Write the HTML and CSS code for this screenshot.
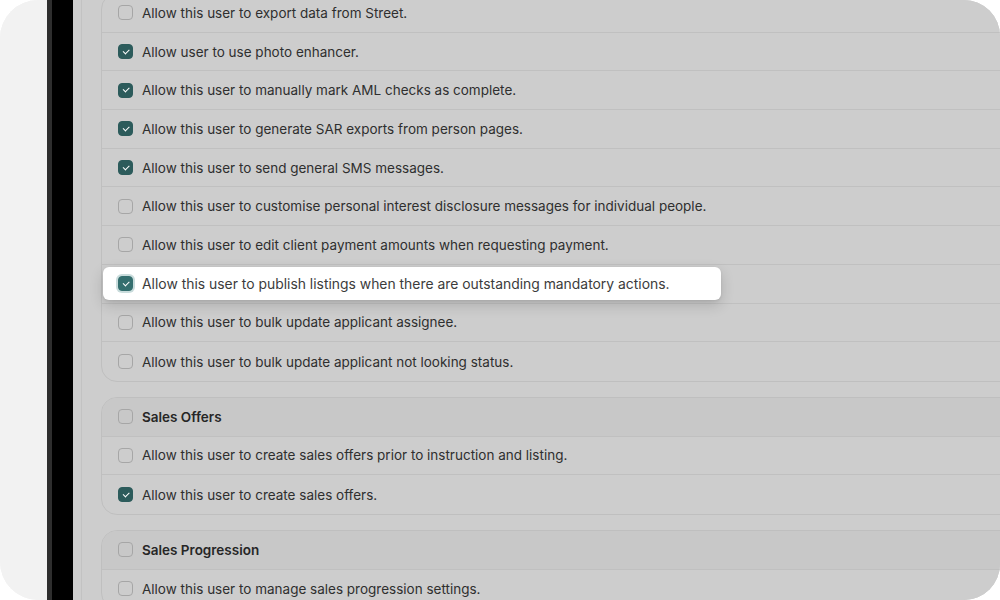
FILE: index.html
```html
<!DOCTYPE html>
<html lang="en">
<head>
<meta charset="utf-8">
<title>Permissions</title>
<link rel="stylesheet" href="styles.css">
</head>
<body>
<div class="frame">
  <div class="side"></div>
  <div class="bezel"></div>
  <div class="screen">
    <div class="rail"></div>
    <div class="content">
      <section class="card first">
        <div class="row"><span class="cb"></span><span class="label">Allow this user to export data from Street.</span></div>
        <div class="row"><span class="cb on"></span><span class="label">Allow user to use photo enhancer.</span></div>
        <div class="row"><span class="cb on"></span><span class="label">Allow this user to manually mark AML checks as complete.</span></div>
        <div class="row"><span class="cb on"></span><span class="label">Allow this user to generate SAR exports from person pages.</span></div>
        <div class="row"><span class="cb on"></span><span class="label">Allow this user to send general SMS messages.</span></div>
        <div class="row"><span class="cb"></span><span class="label">Allow this user to customise personal interest disclosure messages for individual people.</span></div>
        <div class="row"><span class="cb"></span><span class="label">Allow this user to edit client payment amounts when requesting payment.</span></div>
        <div class="row focus-row">
          <div class="lifted"><span class="cb on ring"></span><span class="label">Allow this user to publish listings when there are outstanding mandatory actions.</span></div>
        </div>
        <div class="row"><span class="cb"></span><span class="label">Allow this user to bulk update applicant assignee.</span></div>
        <div class="row"><span class="cb"></span><span class="label">Allow this user to bulk update applicant not looking status.</span></div>
      </section>
      <section class="card">
        <div class="row head"><span class="cb"></span><span class="label">Sales Offers</span></div>
        <div class="row"><span class="cb"></span><span class="label">Allow this user to create sales offers prior to instruction and listing.</span></div>
        <div class="row"><span class="cb on"></span><span class="label">Allow this user to create sales offers.</span></div>
      </section>
      <section class="card">
        <div class="row head"><span class="cb"></span><span class="label">Sales Progression</span></div>
        <div class="row"><span class="cb"></span><span class="label">Allow this user to manage sales progression settings.</span></div>
      </section>
    </div>
  </div>
</div>
</body>
</html>
```

FILE: styles.css
```css
* { box-sizing: border-box; }
html, body { margin: 0; padding: 0; }
body {
  background: #ffffff;
  width: 1000px;
  height: 600px;
  overflow: hidden;
  font-family: Inter, "Noto Sans", "Liberation Sans", sans-serif;
}
.frame {
  width: 1000px;
  height: 600px;
  border-radius: 38px 36px 36px 38px;
  overflow: hidden;
  display: flex;
  background: #f2f2f2;
}
.side { width: 47px; flex: none; background: #f2f2f2; }
.bezel {
  width: 26px;
  flex: none;
  background: #000;
  border-left: 5px solid #2e2e2e;
}
.screen {
  flex: 1;
  display: flex;
  background: #cdcdcd;
  min-width: 0;
  min-height: 0;
}
.rail {
  width: 9px;
  flex: none;
  border-right: 1px solid #c2c2c2;
}
.content {
  flex: none;
  width: 1000px;
  padding-left: 19px;
  margin-top: -7px;
  display: flex;
  flex-direction: column;
  gap: 15px;
}
.card {
  flex: none;
  border: 1px solid #bfbfbf;
  border-radius: 16px;
  overflow: hidden;
  background: #cdcdcd;
}
.row {
  flex: none;
  height: 38.7px;
  display: flex;
  align-items: center;
  padding-left: 16px;
  border-bottom: 1px solid #c0c0c0;
  font-size: 13.5px;
  color: #2f2f2f;
}
.row:last-child { border-bottom: none; }
.row.head {
  background: #c8c8c8;
  font-weight: 600;
  color: #262626;
}
.cb {
  width: 15px;
  height: 15px;
  flex: none;
  border: 1px solid #a6a6a6;
  border-radius: 4px;
  margin-right: 9px;
  position: relative;
}
.cb.on {
  background: #2c5b5b;
  border-color: #2c5b5b;
}
.cb.on::after {
  content: "";
  position: absolute;
  left: 4px;
  top: 3.5px;
  width: 5px;
  height: 2.5px;
  border-left: 1.8px solid #fff;
  border-bottom: 1.8px solid #fff;
  transform: rotate(-45deg);
}
.focus-row {
  padding-left: 1px;
}
.lifted {
  display: flex;
  align-items: center;
  height: 33px;
  width: 618px;
  padding-left: 15px;
  background: #ffffff;
  border-radius: 6px;
  box-shadow: 0 5px 14px rgba(0, 0, 0, 0.16), 0 1px 3px rgba(0, 0, 0, 0.08);
  color: #3c3c3c;
  font-size: 13.9px;
  position: relative;
  z-index: 2;
}
.cb.ring {
  background: #346e6e;
  border-color: #346e6e;
  box-shadow: 0 0 0 2px #c9dcdc;
}
.card.first { overflow: visible; }
.card.first .row:first-child { border-radius: 15px 15px 0 0; }
```
